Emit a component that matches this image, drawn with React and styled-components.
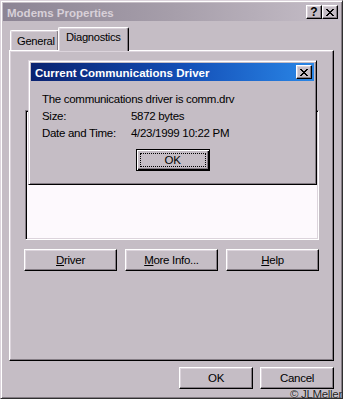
import React from "react";
import styled, { createGlobalStyle } from "styled-components";

const Global = createGlobalStyle`
  html, body { margin: 0; padding: 0; background: #c5bdc5; }
  body { font-family: "Liberation Sans", Arial, sans-serif; font-size: 11px; color: #000; }
`;

const FACE = "#c5bdc5";
const LIGHT = "#dcd4dc";
const SHADOW = "#847c84";

const Window = styled.div`
  position: relative;
  width: 343px;
  height: 399px;
  box-sizing: border-box;
  background: ${FACE};
  border: 1px solid;
  border-color: ${LIGHT} #303030 #303030 ${LIGHT};
  box-shadow: inset 1px 1px #fff, inset -1px -1px ${SHADOW};
  padding: 2px;
  display: flex;
  flex-direction: column;
  overflow: hidden;
`;

const TitleBar = styled.div`
  height: 18px;
  display: flex;
  align-items: center;
  padding: 0 2px 0 4px;
  background: ${(p) =>
    p.$active
      ? "linear-gradient(to right, #0a2270 0%, #1450b8 55%, #2a86e6 100%)"
      : "linear-gradient(to right, #8c8494 0%, #a69eaa 50%, #c6bec8 100%)"};
  color: ${(p) => (p.$active ? "#fff" : "#d8d0d8")};
  font-weight: bold;
  font-size: 11.5px;
  white-space: nowrap;
`;

const TitleText = styled.span`
  flex: 1;
  padding-top: 1px;
`;

const CapButton = styled.div`
  width: 16px;
  height: 14px;
  box-sizing: border-box;
  background: ${FACE};
  border: 1px solid;
  border-color: #fff #000 #000 #fff;
  box-shadow: inset -1px -1px ${SHADOW}, inset 1px 1px ${LIGHT};
  display: flex;
  align-items: center;
  justify-content: center;
  color: #000;
  font-weight: bold;
  font-size: 12px;
  line-height: 1;
`;

const CloseGlyph = () => (
  <svg width="8" height="7" viewBox="0 0 8 7" shapeRendering="crispEdges">
    <path d="M0 0h2v1h-2zM6 0h2v1h-2zM1 1h2v1h-2zM5 1h2v1h-2zM2 2h4v1h-4zM3 3h2v1h-2zM2 4h4v1h-4zM1 5h2v1h-2zM5 5h2v1h-2zM0 6h2v1h-2zM6 6h2v1h-2z" fill="#000" />
  </svg>
);

const Body = styled.div`
  padding: 6px 6px 0 6px;
  display: flex;
  flex-direction: column;
`;

const TabStrip = styled.div`
  display: flex;
  align-items: flex-end;
  height: 23px;
  padding-left: 1px;
  position: relative;
  z-index: 1;
`;

const Tab = styled.div`
  box-sizing: border-box;
  width: ${(p) => p.$w}px;
  height: ${(p) => (p.$selected ? 24 : 20)}px;
  margin-bottom: ${(p) => (p.$selected ? -1 : 0)}px;
  margin-left: ${(p) => (p.$selected ? -1 : 0)}px;
  background: ${FACE};
  border-top: 1px solid #fff;
  border-left: 1px solid #fff;
  border-right: 1px solid #000;
  border-top-left-radius: 2px;
  border-top-right-radius: 2px;
  box-shadow: inset -1px 0 ${SHADOW}, inset 1px 1px ${LIGHT};
  padding: ${(p) => (p.$selected ? "3px 0 0 7px" : "4px 0 0 6px")};
  font-size: 11.2px;
  letter-spacing: -0.3px;
  white-space: nowrap;
`;

const Panel = styled.div`
  box-sizing: border-box;
  height: 311px;
  border: 1px solid;
  border-color: #fff #000 #000 #fff;
  box-shadow: inset -1px -1px ${SHADOW}, inset 1px 1px ${LIGHT};
  padding: 59px 14px 0 15px;
  display: flex;
  flex-direction: column;
`;

const ListBox = styled.div`
  box-sizing: border-box;
  width: 294px;
  height: 130px;
  background: #fdf9fd;
  border: 1px solid;
  border-color: ${SHADOW} #fff #fff ${SHADOW};
  box-shadow: inset 1px 1px #000, inset -1px -1px ${LIGHT};
`;

const ButtonGrid = styled.div`
  margin: 9px 0 0 -1px;
  width: 295px;
  display: grid;
  grid-template-columns: repeat(3, 1fr);
  column-gap: 8px;
`;

const Button = styled.div`
  box-sizing: border-box;
  height: 22px;
  width: ${(p) => (p.$w ? `${p.$w}px` : "auto")};
  background: ${FACE};
  border: 1px solid;
  border-color: ${(p) => (p.$default ? "#000" : `#fff #000 #000 #fff`)};
  box-shadow: ${(p) =>
    p.$default
      ? `inset 1px 1px #fff, inset -1px -1px #000, inset -2px -2px ${SHADOW}`
      : `inset -1px -1px ${SHADOW}, inset 1px 1px ${LIGHT}`};
  display: flex;
  align-items: center;
  justify-content: center;
  font-size: 11.5px;
  letter-spacing: -0.3px;
  padding: ${(p) => (p.$default ? "3px" : "0")};
`;

const Focus = styled.div`
  flex: 1;
  align-self: stretch;
  border: 1px dotted #000;
  display: flex;
  align-items: center;
  justify-content: center;
`;

const U = styled.span`
  text-decoration: underline;
  text-underline-offset: 1px;
`;

const BottomRow = styled.div`
  display: flex;
  justify-content: flex-end;
  gap: 7px;
  margin-top: 6px;
`;

const Dialog = styled.div`
  position: absolute;
  left: 27px;
  top: 59px;
  width: 289px;
  height: 125px;
  box-sizing: border-box;
  background: ${FACE};
  border: 1px solid;
  border-color: ${LIGHT} #000 #000 ${LIGHT};
  box-shadow: inset 1px 1px #fff, inset -1px -1px ${SHADOW};
  padding: 2px;
  display: flex;
  flex-direction: column;
  z-index: 5;
`;

const DialogBody = styled.div`
  padding: 10px 0 0 11px;
  display: flex;
  flex-direction: column;
`;

const InfoGrid = styled.div`
  display: grid;
  grid-template-columns: 89px auto;
  line-height: 17px;
  font-size: 11.5px;
  letter-spacing: -0.3px;
`;

const FullLine = styled.div`
  grid-column: 1 / -1;
`;

const DialogActions = styled.div`
  display: flex;
  justify-content: center;
  padding-right: 11px;
  margin-top: 7px;
`;

const Watermark = styled.div`
  position: absolute;
  right: 0;
  bottom: -2px;
  font-size: 11.5px;
  color: #202020;
  text-shadow: 0 0 1px #eee;
  z-index: 10;
  letter-spacing: -0.3px;
`;

export default function App() {
  return (
    <>
      <Global />
      <Window>
        <TitleBar>
          <TitleText>Modems Properties</TitleText>
          <CapButton>?</CapButton>
          <CapButton>
            <CloseGlyph />
          </CapButton>
        </TitleBar>
        <Body>
          <TabStrip>
            <Tab $w={49}>General</Tab>
            <Tab $w={71} $selected>
              Diagnostics
            </Tab>
          </TabStrip>
          <Panel>
            <ListBox />
            <ButtonGrid>
              <Button>
                <span>
                  <U>D</U>river
                </span>
              </Button>
              <Button>
                <span>
                  <U>M</U>ore Info...
                </span>
              </Button>
              <Button>
                <span>
                  <U>H</U>elp
                </span>
              </Button>
            </ButtonGrid>
          </Panel>
          <BottomRow>
            <Button $w={74}>OK</Button>
            <Button $w={74}>Cancel</Button>
          </BottomRow>
        </Body>
        <Dialog>
          <TitleBar $active>
            <TitleText>Current Communications Driver</TitleText>
            <CapButton>
              <CloseGlyph />
            </CapButton>
          </TitleBar>
          <DialogBody>
            <InfoGrid>
              <FullLine>The communications driver is comm.drv</FullLine>
              <div>Size:</div>
              <div>5872 bytes</div>
              <div>Date and Time:</div>
              <div>4/23/1999 10:22 PM</div>
            </InfoGrid>
            <DialogActions>
              <Button $w={74} $default>
                <Focus>OK</Focus>
              </Button>
            </DialogActions>
          </DialogBody>
        </Dialog>
        <Watermark>© JLMeller</Watermark>
      </Window>
    </>
  );
}
